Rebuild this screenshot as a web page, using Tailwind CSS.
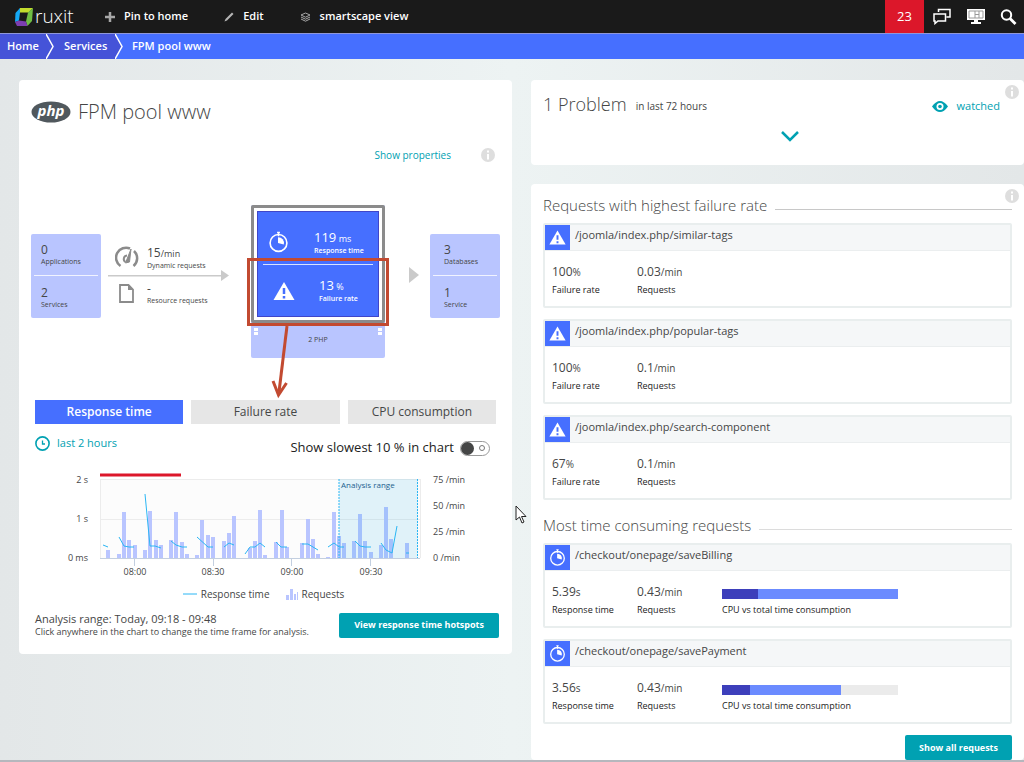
<!DOCTYPE html>
<html lang="en">

<head>
  <meta charset="UTF-8" />
  <meta name="viewport" content="width=device-width, initial-scale=1.0" />
  <title>FPM pool www - ruxit</title>
  <script src="https://cdn.jsdelivr.net/npm/@tailwindcss/browser@4"></script>
</head>

<body class="min-h-screen flex flex-col bg-linear-to-r from-[#e3e7e8] via-[#edf3f3] to-[#e3e7e8] font-['Open_Sans','Noto_Sans',sans-serif] text-[#454646] text-[11px] overflow-hidden">

  <!-- shared icons -->
  <svg class="hidden">
    <symbol id="warn" viewBox="0 0 22 20">
      <path d="M11 1 21.500 19H.5Z" fill="#fff" />
      <path d="M11 7v6M11 15v2.500" stroke="#466fff" stroke-width="2.500" />
    </symbol>
    <symbol id="timer" viewBox="0 0 22 22">
      <circle cx="11" cy="12" r="8.800" fill="none" stroke="#fff" stroke-width="1.700" />
      <path d="M10.500 12V6a6 6 0 0 1 6 7.500Z" fill="#fff" />
      <path d="M9.500 1h3M11 1v4" stroke="#fff" stroke-width="1.500" />
    </symbol>
    <symbol id="info" viewBox="0 0 14 14">
      <circle cx="7" cy="7" r="7" fill="#dedede" />
      <path d="M7 2.500v2M7 6v5.500" stroke="#fff" stroke-width="2" />
    </symbol>
  </svg>

  <header class="h-[34px] bg-[#1a1a1a] border-b border-[#8f97d8] flex items-center text-white text-[11px] font-semibold">
    <a href="#" class="flex items-center ml-[15px] w-[58px]" aria-label="ruxit">
      <svg class="w-[18px] h-[18px] shrink-0" viewBox="0 0 18 18">
        <path d="M5 0h13l-4.500 4.500H4Z" fill="#c3dc2d" />
        <path d="M18 0 17 13l-4.500 5-1.500-4.500 2-9Z" fill="#6fbe44" />
        <path d="M5 0 .5 5 0 14l4-1.500 1-8Z" fill="#14a8f5" />
        <path d="M0 14l4-1.500 7 1 1.500 4.500H2Z" fill="#7c3eb0" />
      </svg>
      <span class="ml-[2px] pb-[2px] text-[19px] leading-5 font-light">ruxit</span>
    </a>
    <button class="flex items-center gap-2 ml-[31px]">
      <svg class="w-3 h-3" viewBox="0 0 12 12"><path d="M6 1v10M1 6h10" stroke="#a7a7a7" stroke-width="2.500" /></svg>
      Pin to home
    </button>
    <button class="flex items-center gap-[9px] ml-9">
      <svg class="w-[10px] h-[10px]" viewBox="0 0 10 10"><path d="M.5 9.500 1.500 7 8 .5 9.500 2 3 8.500Z" fill="#b4b4b4" /></svg>
      Edit
    </button>
    <button class="flex items-center gap-[9px] ml-9">
      <svg class="w-[11px] h-[10px]" viewBox="0 0 11 10" fill="none" stroke="#a7a7a7"><path d="M5.500 1 10 3 5.500 5.200 1 3ZM1 5l4.500 2.200L10 5M1 7l4.500 2.200L10 7" /></svg>
      smartscape view
    </button>
    <button class="ml-auto w-[39px] h-[33px] bg-[#dc172a] font-normal text-[13px]">23</button>
    <button class="ml-[9px]" aria-label="Chat">
      <svg class="w-[18px] h-[17px]" viewBox="0 0 18 17" fill="none" stroke="#fff" stroke-width="1.500"><path d="M5.500 4V1.500H17V9h-3.500M1 6h11.500v7H5l-3 2.500V13H1Z" /></svg>
    </button>
    <button class="ml-4" aria-label="Dashboard">
      <svg class="w-[18px] h-[15px]" viewBox="0 0 18 15"><path d="M0 0h18v11H0ZM7 11h4v2h3v2H4v-2h3Z" fill="#fff" /><path d="M2 2h14v7H2ZM8 2v7M12 2v7M8 5.500h4" fill="none" stroke="#999" /></svg>
    </button>
    <button class="mr-[7px] ml-[15px]" aria-label="Search">
      <svg class="w-[17px] h-4" viewBox="0 0 17 16" fill="none" stroke="#fff"><circle cx="6.500" cy="6" r="4.700" stroke-width="2" /><path d="m10 9.500 5.500 5.500" stroke-width="2.800" /></svg>
    </button>
  </header>

  <nav class="h-[25px] bg-[#466fff] flex items-center text-white text-[11px] font-semibold">
    <a href="#" class="h-full bg-[#4553d8] pl-[7px] w-[46px] flex items-center">Home</a>
    <svg class="h-full w-[9px] bg-[#4553d8]" viewBox="0 0 9 25"><path d="m0 0 7 12.500L0 25" fill="none" stroke="#fff" stroke-width="1.500" /></svg>
    <a href="#" class="h-full bg-[#4553d8] pl-[9px] w-[60px] flex items-center">Services</a>
    <svg class="h-full w-[9px]" viewBox="0 0 9 25"><path d="m0 0 7 12.500L0 25" fill="#4553d8" stroke="#fff" stroke-width="1.500" /></svg>
    <span class="ml-2">FPM pool www</span>
  </nav>

  <main class="grid grid-cols-2 items-start gap-[19px] pl-[19px] pt-[21px]">

    <section class="bg-white rounded-sm px-3 pb-4">
      <div class="flex items-center gap-[7px] pt-4 h-12">
        <svg class="w-10 h-[22px]" viewBox="0 0 40 22">
          <ellipse cx="20" cy="11" rx="19.500" ry="10.500" fill="#50585d" />
          <text x="20" y="15" text-anchor="middle" class="font-['Open_Sans',sans-serif] font-bold italic text-[15px] leading-4" fill="#fff">php</text>
        </svg>
        <h1 class="text-[20px] font-light">FPM pool www</h1>
      </div>
      <div class="flex items-center justify-end gap-[30px] mt-5 h-[14px] pr-[5px]">
        <a href="#" class="text-[#00a1b2] text-[10px]">Show properties</a>
        <svg class="w-[14px] h-[14px]"><use href="#info" /></svg>
      </div>

      <!-- service flow -->
      <div class="flex mt-[43px] text-[7px] leading-[9px]">
        <div class="mt-[29px] w-[70px] h-[84px] bg-[#b9c5ff] rounded-xs px-[3px]">
          <div class="h-[42px] border-b border-white/80 pl-[7px] pt-[9px]"><p class="text-[12px] leading-[14px]">0</p>Applications</div>
          <div class="pl-[7px] pt-[10px]"><p class="text-[12px] leading-[14px]">2</p>Services</div>
        </div>
        <div class="mt-[36px] ml-[7px] w-[121px]">
          <div class="flex items-center gap-2 h-[29px] pt-1 pl-[7px]">
            <svg class="w-6 h-6" viewBox="0 0 24 24" fill="none" stroke="#8b8b8b" stroke-width="2.500"><path d="M5.500 20A10 10 0 0 1 15 2.500M19 5a10 10 0 0 1-.5 15" /><path d="m10.500 17 5.500-14-1.500 13Z" fill="#8b8b8b" stroke-width="1" /><path d="M12 9.500a3.500 3.500 0 0 0-1.500 6.500" stroke-width="2" /></svg>
            <div><p class="text-[12px] leading-[15px]">15<span class="text-[9px]">/min</span></p>Dynamic requests</div>
          </div>
          <svg class="w-[121px] h-[11px]" viewBox="0 0 121 11"><path d="M0 5h113v1.500H0ZM113 0l8 5.500-8 5.500Z" fill="#cacaca" /></svg>
          <div class="flex items-center gap-[13px] h-6 pl-[11px]">
            <svg class="w-[15px] h-[19px]" viewBox="0 0 15 19"><path d="M1 1h8.500L14 5.500V18H1Z" fill="none" stroke="#8b8b8b" stroke-width="1.800" /><path d="M9 1v5h5" fill="#8b8b8b" /></svg>
            <div><p class="text-[12px] leading-[14px]">-</p>Resource requests</div>
          </div>
        </div>
        <div class="relative ml-[22px] w-[134px] h-[153px] bg-[#b9c5ff] rounded-xs">
          <div class="h-[118px] border-3 border-[#8b8b8b] bg-white p-[3px] rounded-xs">
            <div class="h-full bg-[#466fff] border border-[#4046c8] px-[5px] text-white font-semibold whitespace-nowrap">
              <div class="h-[53px] border-b border-white/80 flex items-center pt-2 pl-[5px] gap-[25px]">
                <svg class="w-[21px] h-[22px] shrink-0"><use href="#timer" /></svg>
                <div><p class="text-[13px] leading-[15px] font-normal">119<span class="text-[9px]"> ms</span></p>Response time</div>
              </div>
              <div class="h-[51px] flex items-center pl-[10px] gap-6">
                <svg class="w-[22px] h-5 shrink-0"><use href="#warn" /></svg>
                <div><p class="text-[13px] leading-[15px] font-normal">13<span class="text-[9px]"> %</span></p>Failure rate</div>
              </div>
            </div>
          </div>
          <div class="flex justify-between px-[3px] pt-[5px]">
            <svg class="w-1 h-[7px]"><path d="M0 0h4v3H0ZM0 4h4v3H0Z" fill="#fff" /></svg>
            <p class="pt-[7px] leading-[10px]">2 PHP</p>
            <svg class="w-1 h-[7px]"><path d="M0 0h4v3H0ZM0 4h4v3H0Z" fill="#fff" /></svg>
          </div>
          <!-- annotation drawn over the failure rate -->
          <svg class="absolute left-[-4px] top-[53px] w-[144px] h-[142px]" viewBox="0 0 144 142" fill="none" stroke="#c24a31">
            <rect x="1.500" y="1.500" width="139" height="65" stroke-width="3" />
            <path d="M40 68 32 134" stroke-width="3" /><path d="m26 123 5.500 14 8-12" stroke-width="3" />
          </svg>
        </div>
        <svg class="ml-6 mt-[62px] w-[10px] h-4" viewBox="0 0 10 16"><path d="m0 0 10 8-10 8Z" fill="#cacaca" /></svg>
        <div class="ml-auto mt-[29px] w-[70px] h-[84px] bg-[#b9c5ff] rounded-xs px-[3px]">
          <div class="h-[42px] border-b border-white/80 pl-[11px] pt-[9px]"><p class="text-[12px] leading-[14px]">3</p>Databases</div>
          <div class="pl-[11px] pt-[10px]"><p class="text-[12px] leading-[14px]">1</p>Service</div>
        </div>
      </div>

      <div class="px-1">
        <div class="grid grid-cols-3 gap-2 mt-[42px] text-[12px]">
          <button class="h-6 bg-[#466fff] text-white font-semibold">Response time</button>
          <button class="h-6 bg-[#e6e6e6]">Failure rate</button>
          <button class="h-6 bg-[#e6e6e6]">CPU consumption</button>
        </div>

        <div class="flex justify-between mt-[11px] h-[26px]">
          <a href="#" class="flex items-center gap-[7px] h-4 text-[#00a1b2]">
            <svg class="w-[15px] h-[15px]" viewBox="0 0 15 15" fill="none" stroke="#00a1b2"><circle cx="7.500" cy="7.500" r="6.600" stroke-width="1.600" /><path d="M7.500 4.500V8H10" stroke-width="1.300" /></svg>
            last 2 hours
          </a>
          <label class="flex items-center gap-[6px] pr-[6px] text-[13px] text-[#222]">
            Show slowest 10 % in chart
            <input type="checkbox" class="appearance-none w-[30px] h-[15px] border border-[#999] rounded-full flex items-center justify-between pr-1 before:content-[''] before:w-[13px] before:h-[13px] before:rounded-full before:bg-[#454646] after:content-[''] after:w-[6px] after:h-[6px] after:rounded-full after:border after:border-[#777]" />
          </label>
        </div>

        <svg id="chart" class="w-full mt-[9px] font-['Open_Sans','Noto_Sans',sans-serif] text-[9px]" viewBox="35 470 461 110" fill="#454646">
          <rect x="100" y="479" width="320" height="79" fill="#fcfcfc" />
          <path d="M100 479.500H420M100 519.500H420M100.500 479V558M420.500 479V558" stroke="#ececec" />
          <path id="bars" fill="#b9c5ff" />
          <rect x="339" y="479" width="79" height="79" fill="#00a1e6" fill-opacity=".11" />
          <path d="M339 479V558M417.500 479V558" stroke="#2ab6f4" stroke-dasharray="2 1" />
          <path d="M100 558.500H420M134.500 558v8M213.500 558v8M291.500 558v8M370.500 558v8" stroke="#c3cfe0" />
          <path id="lines" fill="none" stroke="#2ab6f4" />
          <path d="M100 475H181" stroke="#dc172a" stroke-width="3" />
          <g text-anchor="end">
            <text x="88" y="483">2 s</text>
            <text x="88" y="522">1 s</text>
            <text x="88" y="561">0 ms</text>
          </g>
          <g>
            <text x="433" y="483">75 /min</text>
            <text x="433" y="509">50 /min</text>
            <text x="433" y="535">25 /min</text>
            <text x="433" y="561">0 /min</text>
          </g>
          <g text-anchor="middle">
            <text x="135" y="575">08:00</text>
            <text x="213" y="575">08:30</text>
            <text x="292" y="575">09:00</text>
            <text x="371" y="575">09:30</text>
          </g>
          <text x="341" y="488" class="text-[8px]" fill="#1d5f8f">Analysis range</text>
        </svg>

        <div class="flex items-center justify-center text-[10px] h-4 mt-[6px] pr-1">
          <svg class="w-[14px] h-[2px] mr-1"><path d="M0 1h14" stroke="#2ab6f4" /></svg>
          Response time
          <svg class="w-3 h-3 ml-4 mr-1"><path d="M0 7h3v5H0ZM4 1h3v11H4ZM8 6h2v6H8ZM11 4h2v8h-2Z" fill="#b9c5ff" /></svg>
          Requests
        </div>

        <div class="flex items-center justify-between mt-[10px] -mr-1 pr-px">
          <div class="leading-[13px]">
            <p>Analysis range: Today, 09:18 - 09:48</p>
            <p class="text-[9px]">Click anywhere in the chart to change the time frame for analysis.</p>
          </div>
          <button class="h-[25px] px-[15px] bg-[#00a1b2] text-white text-[9px] font-bold rounded-xs">View response time hotspots</button>
        </div>
      </div>
    </section>

    <div>
      <section class="bg-white rounded-sm h-[85px] px-3 relative">
        <div class="flex items-center pt-[11px] pr-3">
          <h2 class="text-[18px] font-light">1 Problem</h2>
          <span class="ml-[9px] mt-1 text-[10px]">in last 72 hours</span>
          <a href="#" class="ml-auto mt-[3px] flex items-center gap-[9px] text-[#00a1b2]">
            <svg class="w-4 h-[11px]" viewBox="0 0 16 11"><path d="M0 5.500Q8-5.500 16 5.500 8 16.500 0 5.500Z" fill="#00a1b2" /><circle cx="8" cy="5.500" r="3.500" fill="#fff" /><circle cx="8" cy="5.500" r="1.800" fill="#00a1b2" /></svg>
            watched
          </a>
        </div>
        <div class="flex justify-center pl-6 pt-[13px]">
          <button aria-label="Expand">
            <svg class="w-[18px] h-[11px]" viewBox="0 0 18 11"><path d="m1 1 8 8 8-8" fill="none" stroke="#00a1b2" stroke-width="2.500" /></svg>
          </button>
        </div>
        <svg class="absolute right-[5px] top-[5px] w-[14px] h-[14px]"><use href="#info" /></svg>
      </section>

      <section class="bg-white rounded-sm mt-[19px] px-3 pt-[11px] relative">
        <svg class="absolute right-[5px] top-[5px] w-[14px] h-[14px]"><use href="#info" /></svg>
        <div class="flex items-center gap-2 h-5 mb-2">
          <h2 class="text-[15px] font-light">Requests with highest failure rate</h2>
          <span class="grow h-px bg-[#c8c8c8] mt-2"></span>
        </div>
        <div id="failing" class="space-y-[11px]"></div>
        <div class="flex items-center gap-2 h-5 mt-[15px] mb-2">
          <h2 class="text-[15px] font-light">Most time consuming requests</h2>
          <span class="grow h-px bg-[#dcdcdc] mt-2"></span>
        </div>
        <div id="slow" class="space-y-[11px]"></div>
        <div class="flex justify-end mt-[11px]">
          <button class="h-[25px] px-[14px] bg-[#00a1b2] text-white text-[9px] font-bold rounded-xs">Show all requests</button>
        </div>
      </section>
    </div>
  </main>

  <div class="h-[2px] w-full bg-[#b5b7bd] fixed bottom-0"></div>

  <!-- mouse pointer -->
  <svg class="absolute left-[515px] top-[505px] w-3 h-[19px]" viewBox="0 0 12 19"><path d="M1 1v14l3.500-3 2.500 6 2-1-2.500-5.500H11Z" fill="#fff" stroke="#222" /></svg>

  <script>
    const failing = [
      { url: '/joomla/index.php/similar-tags', value: '100', unit: '%', rate: '0.03' },
      { url: '/joomla/index.php/popular-tags', value: '100', unit: '%', rate: '0.1' },
      { url: '/joomla/index.php/search-component', value: '67', unit: '%', rate: '0.1' }
    ];
    const slow = [
      { url: '/checkout/onepage/saveBilling', value: '5.39', unit: 's', rate: '0.43', cpu: 36, total: 176 },
      { url: '/checkout/onepage/savePayment', value: '3.56', unit: 's', rate: '0.43', cpu: 28, total: 119 }
    ];

    function card(r, icon, label) {
      const usage = r.cpu ? `
        <div class="pt-1">
          <div class="w-44 h-[10px] mt-[2px] mb-[2px] flex bg-[#ebebeb]">
            <div class="bg-[#3d3fbb]" style="width:${r.cpu}px"></div>
            <div class="bg-[#6b8bff]" style="width:${r.total - r.cpu}px"></div>
          </div>
          CPU vs total time consumption
        </div>` : '';
      return `
        <article class="h-[85px] border-2 border-[#e9eeee] rounded-xs">
          <div class="flex items-start h-[26px] bg-[#f5f7f8] border-b border-[#ebeeef]">
            <span class="w-[25px] h-[25px] bg-[#466fff] flex items-center justify-center"><svg class="w-[17px] h-[17px]"><use href="${icon}" /></svg></span>
            <a href="#" class="ml-[5px] text-[11px] leading-5">${r.url}</a>
          </div>
          <div class="flex pl-[7px] pt-3 text-[9px] leading-[18px] text-[#222]">
            <div class="w-[85px]"><p class="text-[12px] text-[#454646]">${r.value}<span class="text-[10px]">${r.unit}</span></p>${label}</div>
            <div class="w-[85px]"><p class="text-[12px] text-[#454646]">${r.rate}<span class="text-[10px]">/min</span></p>Requests</div>
            ${usage}
          </div>
        </article>`;
    }

    document.getElementById('failing').innerHTML = failing.map(r => card(r, '#warn', 'Failure rate')).join('');
    document.getElementById('slow').innerHTML = slow.map(r => card(r, '#timer', 'Response time')).join('');

    // request bars: [x, height]
    const bars = [
      [106, 8], [117, 4], [122, 46], [127, 18], [133, 13], [143, 8], [148, 47], [154, 18], [159, 13],
      [169, 18], [174, 46], [180, 16], [185, 4], [195, 3], [200, 38], [206, 23], [211, 21],
      [222, 17], [227, 25], [232, 42], [248, 10], [253, 17], [258, 48], [263, 3],
      [274, 16], [280, 48], [285, 11], [300, 15], [306, 39], [311, 19], [316, 4],
      [326, 1], [332, 46], [337, 22], [342, 15], [352, 17], [358, 44], [363, 17], [369, 6],
      [379, 13], [384, 51], [389, 19], [405, 15]
    ];
    document.getElementById('bars').setAttribute('d', bars.map(([x, h]) => `M${x} 558v-${h}h4v${h}Z`).join(''));

    // response time, broken where there is no data
    const lines = [
      '103,545 108,547', '119,537 124,546 129,547 134,547', '145,494 150,546 155,546 161,548',
      '171,541 176,545 182,547 187,547', '197,537 208,547 213,547', '224,547 229,543 234,545',
      '245,554 250,547 255,547 260,543 265,547', '276,542 281,547 287,547',
      '302,544 308,544 313,547 318,550', '328,547 334,543 339,547 344,547',
      '355,541 360,546 365,547 371,547', '381,543 386,550 392,553 397,526', '406,553 409,553'
    ];
    document.getElementById('lines').setAttribute('d', lines.map(l => 'M' + l).join(''));
  </script>
</body>

</html>
